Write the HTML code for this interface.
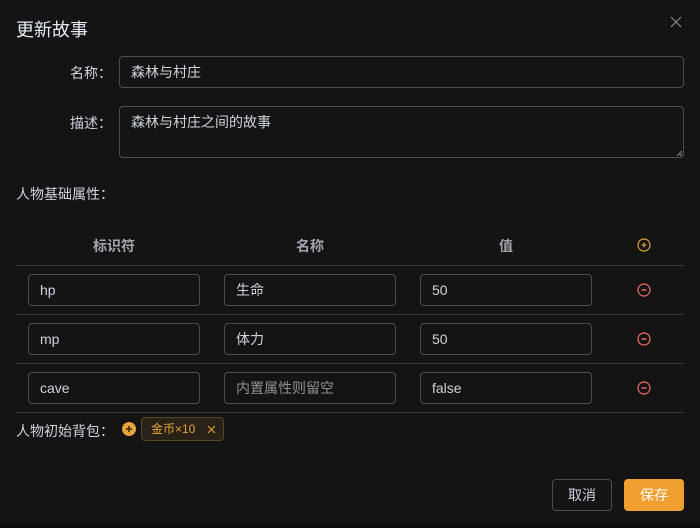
<!DOCTYPE html>
<html><head><meta charset="utf-8"><style>
*{box-sizing:border-box;margin:0;padding:0}
body{width:700px;height:528px;background:#0b0b0b;font-family:"Liberation Sans","Noto Sans CJK SC",sans-serif;color:#cfd3dc;position:relative;overflow:hidden}
.dlg{position:absolute;left:0;top:0;width:700px;height:525px;background:#141414}
.a{position:absolute}
.inp{position:absolute;border:1px solid #4c4d4f;border-radius:4px;background:#141414;font-size:14px;color:#cfd3dc;padding-left:11px;line-height:30px}
.lbl{position:absolute;font-size:14px;color:#cfd3dc}
.line{position:absolute;left:16px;width:668px;height:1px;background:#363637}
.th{position:absolute;top:236px;font-size:14px;font-weight:bold;color:#a3a6ad;width:172px;text-align:center}
</style></head><body>
<div class="dlg">
<div class="a" style="left:16px;top:16px;font-size:18px;color:#e5eaf3">更新故事</div>
<svg class="a" style="left:669px;top:15px" width="14" height="14"><path d="M2 2L12 12M12 2L2 12" stroke="#8d9095" stroke-width="1.1"/></svg>
<div class="lbl" style="left:70px;top:63px">名称：</div>
<div class="inp" style="left:119px;top:56px;width:565px;height:32px">森林与村庄</div>
<div class="lbl" style="left:70px;top:113px">描述：</div>
<div class="inp" style="left:119px;top:106px;width:565px;height:52px;line-height:20px;padding-top:5px">森林与村庄之间的故事</div>
<svg class="a" style="left:676px;top:150px" width="7" height="7"><path d="M6 1L1 6M6 4L4 6" stroke="#8d9095"/></svg>
<div class="lbl" style="left:16px;top:184px">人物基础属性：</div>
<div class="th" style="left:28px">标识符</div>
<div class="th" style="left:224px">名称</div>
<div class="th" style="left:420px">值</div>
<svg class="a" style="left:637px;top:238px" width="14" height="14"><circle cx="7" cy="7" r="6" fill="none" stroke="#e6a23c" stroke-width="1.2"/><path d="M4.5 7h5M7 4.5v5" stroke="#e6a23c" stroke-width="1.2"/></svg>
<div class="line" style="top:265px"></div>
<div class="inp" style="left:28px;top:274px;width:172px;height:32px">hp</div>
<div class="inp" style="left:224px;top:274px;width:172px;height:32px">生命</div>
<div class="inp" style="left:420px;top:274px;width:172px;height:32px">50</div>
<svg class="a" style="left:637px;top:283px" width="14" height="14"><circle cx="7" cy="7" r="6" fill="none" stroke="#f56c6c" stroke-width="1.2"/><path d="M4.5 7h5" stroke="#f56c6c" stroke-width="1.4"/></svg>
<div class="line" style="top:314px"></div>
<div class="inp" style="left:28px;top:323px;width:172px;height:32px">mp</div>
<div class="inp" style="left:224px;top:323px;width:172px;height:32px">体力</div>
<div class="inp" style="left:420px;top:323px;width:172px;height:32px">50</div>
<svg class="a" style="left:637px;top:332px" width="14" height="14"><circle cx="7" cy="7" r="6" fill="none" stroke="#f56c6c" stroke-width="1.2"/><path d="M4.5 7h5" stroke="#f56c6c" stroke-width="1.4"/></svg>
<div class="line" style="top:363px"></div>
<div class="inp" style="left:28px;top:372px;width:172px;height:32px">cave</div>
<div class="inp" style="left:224px;top:372px;width:172px;height:32px;color:#8d9095">内置属性则留空</div>
<div class="inp" style="left:420px;top:372px;width:172px;height:32px">false</div>
<svg class="a" style="left:637px;top:381px" width="14" height="14"><circle cx="7" cy="7" r="6" fill="none" stroke="#f56c6c" stroke-width="1.2"/><path d="M4.5 7h5" stroke="#f56c6c" stroke-width="1.4"/></svg>
<div class="line" style="top:412px"></div>
<div class="lbl" style="left:16px;top:421px">人物初始背包：</div>
<svg class="a" style="left:122px;top:422px" width="14" height="14"><circle cx="7" cy="7" r="7" fill="#e6a23c"/><path d="M4 7h6M7 4v6" stroke="#3a2a10" stroke-width="1.6"/></svg>
<div class="a" style="left:141px;top:417px;width:83px;height:24px;border:1px solid #5a4524;background:#292218;border-radius:4px;color:#e6a23c;font-size:12px;line-height:22px;padding-left:9px">金币×10<svg style="position:absolute;left:65px;top:7px" width="9" height="9"><path d="M1 1L8 8M8 1L1 8" stroke="#e6a23c" stroke-width="1.1"/></svg></div>
<div class="a" style="left:552px;top:479px;width:60px;height:32px;border:1px solid #4c4d4f;border-radius:4px;font-size:14px;text-align:center;line-height:30px;color:#cfd3dc">取消</div>
<div class="a" style="left:624px;top:479px;width:60px;height:32px;background:#f0a030;border-radius:4px;font-size:14px;text-align:center;line-height:32px;color:#fff">保存</div>
</div>
</body></html>
